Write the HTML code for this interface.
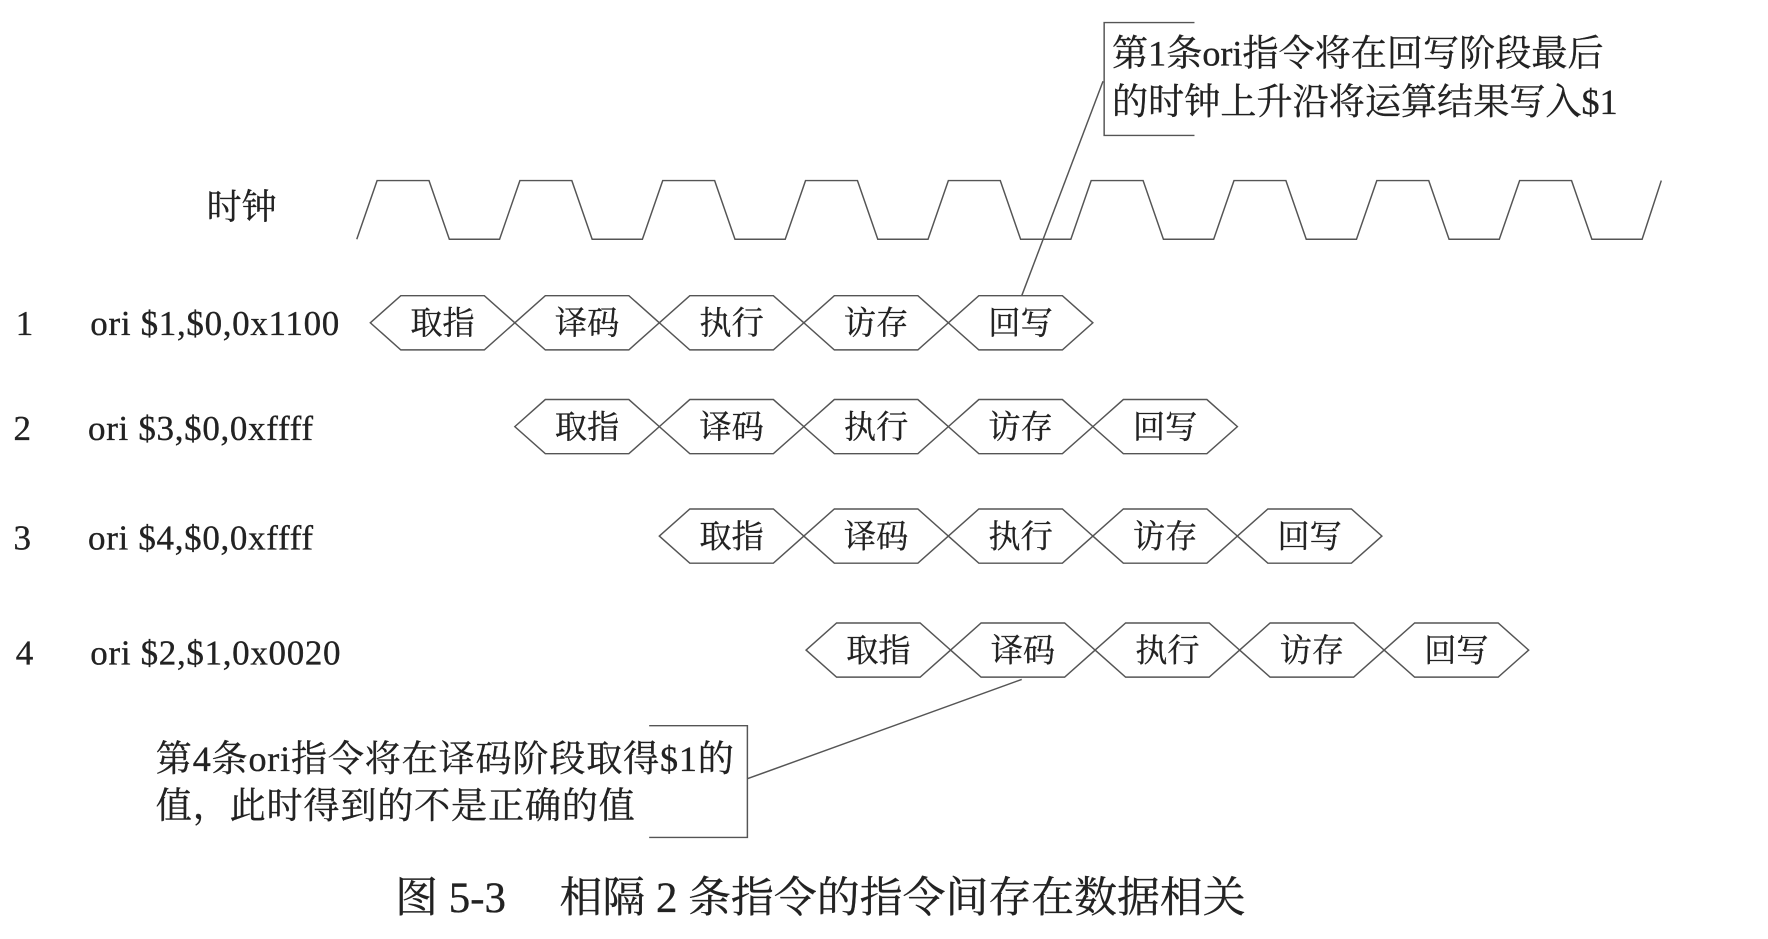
<!DOCTYPE html>
<html><head><meta charset="utf-8"><style>
html,body{margin:0;padding:0;background:#fff;}
svg{display:block;}
text{font-family:"Liberation Serif","Noto Serif CJK SC",serif;fill:#222;stroke:#222;stroke-width:0.3;}
</style></head><body>
<svg width="1768" height="939" viewBox="0 0 1566 832" preserveAspectRatio="none" xmlns="http://www.w3.org/2000/svg">
<g fill="none" stroke="#555" stroke-width="1.3">
<path id="clk" d=""/>
<path d="M1058,20 L978,20 L978,120 L1058,120"/>
<path d="M977,72 L905,262"/>
<path d="M575,643 L662,643 L662,742 L575,742"/>
<path d="M662,690 L905,602"/>
</g>
<g id="hexes" fill="none" stroke="#555" stroke-width="1.3"></g>
<g font-size="31">
<text x="14" y="297">1</text><text x="80" y="297" letter-spacing="0.6">ori $1,$0,0x1100</text>
<text x="12" y="390">2</text><text x="78" y="390" letter-spacing="0.6">ori $3,$0,0xffff</text>
<text x="12" y="487">3</text><text x="78" y="487" letter-spacing="0.6">ori $4,$0,0xffff</text>
<text x="14" y="589">4</text><text x="80" y="589" letter-spacing="0.6">ori $2,$1,0x0020</text>
<text x="183" y="194">时钟</text>
</g>
<g font-size="32">
<text x="985" y="58">第1条ori指令将在回写阶段最后</text>
<text x="985" y="101">的时钟上升沿将运算结果写入$1</text>
<text x="138" y="683" letter-spacing="0.7">第4条ori指令将在译码阶段取得$1的</text>
<text x="138" y="725" letter-spacing="0.7">值，此时得到的不是正确的值</text>
</g>
<text x="350" y="808" font-size="38">图 5-3　 相隔 2 条指令的指令间存在数据相关</text>
<g id="hextext" font-size="28.5" text-anchor="middle"></g>
<script>
var ns="http://www.w3.org/2000/svg";
var P=126.5,d="",x0=316;
for(var k=0;k<9;k++){var b=x0+P*k;d+=(k?" L":"M")+b+",212 L"+(b+18)+",160 L"+(b+64)+",160 L"+(b+82)+",212";}
d+=" L"+(x0+P*9)+",212 L"+(x0+P*9+17)+",160";
document.getElementById("clk").setAttribute("d",d);
var rows=[[328,286],[456,378],[584,475],[714,576]];
var names=["取指","译码","执行","访存","回写"];
var g=document.getElementById("hexes"),t=document.getElementById("hextext");
rows.forEach(function(r){
 for(var i=0;i<5;i++){
  var x=r[0]+128*i,y=r[1];
  var p=document.createElementNS(ns,"polygon");
  p.setAttribute("points",[x,y,x+27,y-24,x+101,y-24,x+128,y,x+101,y+24,x+27,y+24].join(","));
  g.appendChild(p);
  var tx=document.createElementNS(ns,"text");
  tx.setAttribute("x",x+64);tx.setAttribute("y",y+10);
  tx.textContent=names[i];t.appendChild(tx);
 }
});
</script>
</svg>
</body></html>
